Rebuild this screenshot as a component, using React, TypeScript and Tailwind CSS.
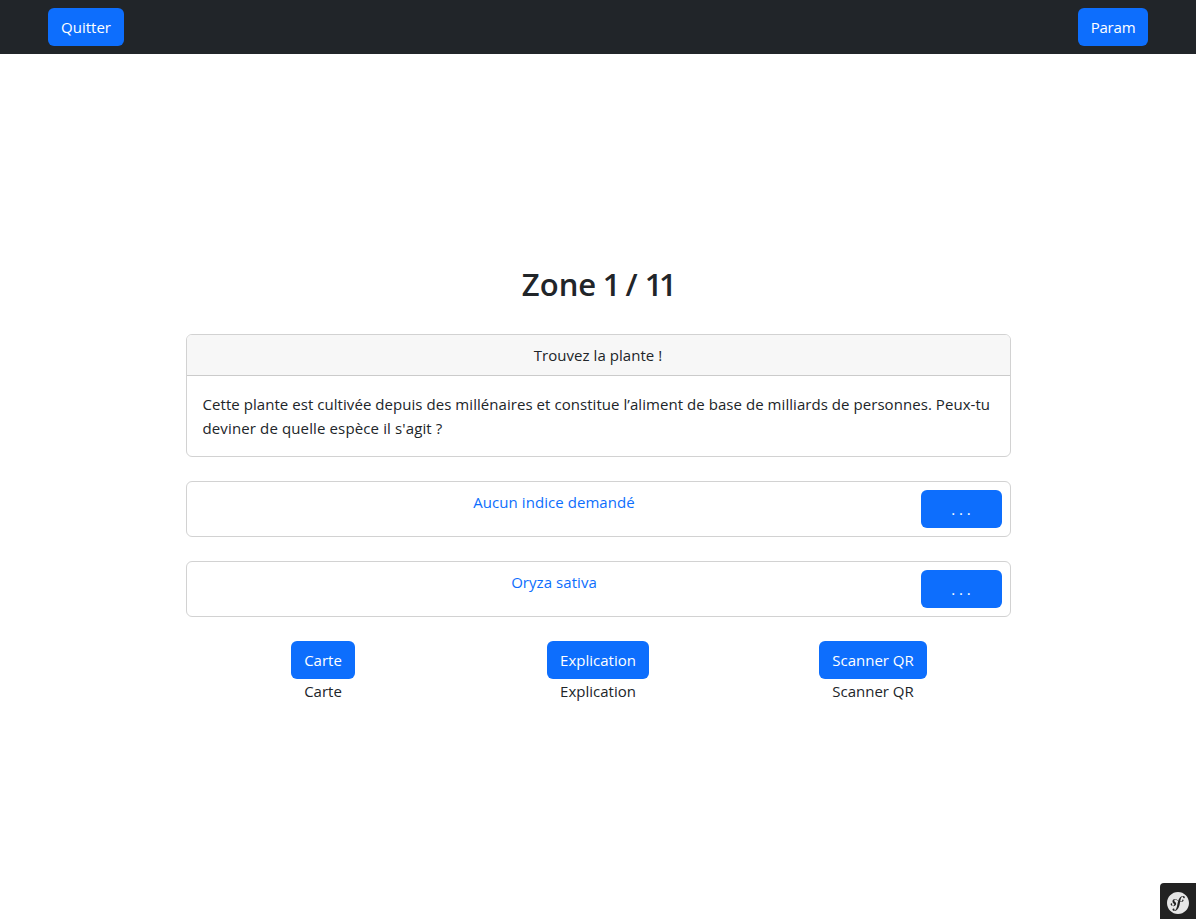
import type { ReactNode } from "react";
import { SiSymfony } from "react-icons/si";

function Button({ className = "", children }: { className?: string; children: ReactNode }) {
  return (
    <button
      type="button"
      className={`flex h-[38px] items-center justify-center rounded-md bg-[#0d6efd] whitespace-nowrap text-white ${className}`}
    >
      {children}
    </button>
  );
}

function AnswerRow({ children }: { children: ReactNode }) {
  return (
    <div className="mt-6 flex h-14 items-start rounded-md border border-[#d2d2d2] py-2 pr-2">
      <p className="flex-1 text-center tracking-[0.06px] text-[#0d6efd]">{children}</p>
      <Button className="w-[81px] pr-px">. . .</Button>
    </div>
  );
}

function Action({ label, className }: { label: string; className: string }) {
  return (
    <div className="flex flex-1 flex-col items-center">
      <Button className={`pl-px ${className}`}>{label}</Button>
      <span className="pl-px">{label}</span>
    </div>
  );
}

export default function App() {
  return (
    <div className="flex h-[919px] w-full flex-col bg-white font-['Open_Sans','Noto_Sans',sans-serif] text-[15px] leading-6 text-[#212529]">
      <nav className="flex h-[54px] items-center justify-between bg-[#212529] px-12">
        <Button className="w-[76px]">Quitter</Button>
        <Button className="w-[70px] tracking-[-0.2px]">Param</Button>
      </nav>

      <main className="ml-[186px] flex w-[825px] flex-1 flex-col pt-[211px]">
        <h1 className="pr-0.5 text-center text-[31px] leading-[38px] font-semibold">
          Zone<span className="tracking-[-1.5px]"> 1 </span>
          <span className="tracking-[-0.5px]">/ </span>
          <span className="tracking-[-3.5px]">11</span>
        </h1>

        <section className="mt-[31px] h-[123px] overflow-hidden rounded-md border border-[#d2d2d2]">
          <h2 className="flex h-[41px] items-center justify-center border-b border-[#cbcbcb] bg-[#f7f7f7] pr-px tracking-[0.05px]">
            Trouvez la plante !
          </h2>
          <p className="pt-4 pl-[15.5px] tracking-[0.054px] whitespace-nowrap">
            Cette plante est cultivée depuis des millénaires et constitue l’aliment de base de milliards de personnes. Peux-tu
            <br />
            <span className="tracking-[0.13px]">deviner de quelle espèce il s'agit ?</span>
          </p>
        </section>

        <AnswerRow>Aucun indice demandé</AnswerRow>
        <AnswerRow>Oryza sativa</AnswerRow>

        <div className="mt-6 mr-[1px] -ml-[1px] flex">
          <Action label="Carte" className="w-16" />
          <Action label="Explication" className="w-[102px]" />
          <Action label="Scanner QR" className="w-[108px]" />
        </div>
      </main>

      <footer className="flex justify-end">
        <div className="flex size-9 items-center justify-center rounded-tl bg-[#222222] pt-1">
          <SiSymfony className="size-[22px] text-[#e6e6e6]" />
        </div>
      </footer>
    </div>
  );
}
